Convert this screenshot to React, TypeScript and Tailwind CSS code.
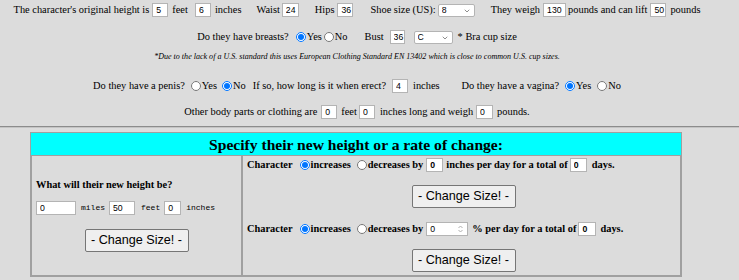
import React from "react";
import { ChevronDown } from "lucide-react";

type BoxProps = { v: string; w: string; ml?: string };

const Box = ({ v, w, ml = "" }: BoxProps) => (
  <input
    defaultValue={v}
    className={`${w} ${ml} h-[14px] shrink-0 bg-white border border-[#b4b4b4] pl-[3px] pr-0 text-[8.7px] leading-none font-['Liberation_Sans',Arial,sans-serif] text-black outline-none`}
  />
);

const Sel = ({ v, w, ml = "" }: BoxProps) => (
  <div className={`relative ${w} ${ml} h-[13px] shrink-0`}>
    <select
      defaultValue={v}
      className="appearance-none w-full h-full bg-white border border-[#b4b4b4] rounded-[2px] pl-[3px] text-[8.7px] leading-none font-['Liberation_Sans',Arial,sans-serif] text-black outline-none"
    >
      <option>{v}</option>
    </select>
    <ChevronDown className="absolute right-[4px] top-[3px] w-[8px] h-[8px] text-[#666] pointer-events-none" strokeWidth={2.2} />
  </div>
);

const Radio = ({ name, on, ml }: { name: string; on?: boolean; ml: string }) => (
  <input type="radio" name={name} defaultChecked={on} className={`${ml} mr-[1px] w-[10px] h-[10px] m-0 shrink-0`} />
);

const T = ({ children, ml = "" }: { children: React.ReactNode; ml?: string }) => (
  <span className={`${ml} whitespace-pre shrink-0`}>{children}</span>
);

const ChangeBtn = () => (
  <button className="mx-auto flex items-center justify-center w-[104px] h-[23px] bg-[#efefef] border border-[#767676] rounded-[2px] text-[12.6px] font-['Liberation_Sans',Arial,sans-serif] text-black">
    - Change Size! -
  </button>
);

const App: React.FC = () => {
  return (
    <div className="w-[739px] h-[280px] overflow-hidden bg-[#dcdcdc] text-black text-[10.4px] leading-none font-['Liberation_Serif','Times_New_Roman',serif]">
      <div className="w-[714px] pt-[2px]">
        {/* height / measurements */}
        <div className="flex items-center justify-center h-[16px]">
          <T>The character's original height is</T>
          <Box v="5" w="w-[16px]" ml="ml-[3px]" />
          <T ml="ml-[4px]">feet</T>
          <Box v="6" w="w-[16px]" ml="ml-[7px]" />
          <T ml="ml-[4px]">inches</T>
          <T ml="ml-[15px]">Waist</T>
          <Box v="24" w="w-[17px]" ml="ml-[2px]" />
          <T ml="ml-[16px]">Hips</T>
          <Box v="36" w="w-[16px]" ml="ml-[3px]" />
          <T ml="ml-[17px]">Shoe size (US):</T>
          <Sel v="8" w="w-[37px]" ml="ml-[2px]" />
          <T ml="ml-[16px]">They weigh</T>
          <Box v="130" w="w-[23px]" ml="ml-[3px]" />
          <T ml="ml-[2px]">pounds and can lift</T>
          <Box v="50" w="w-[16px]" ml="ml-[3px]" />
          <T ml="ml-[4px]">pounds</T>
        </div>

        {/* breasts */}
        <div className="flex items-center justify-center h-[16px] mt-[11px]">
          <T>Do they have breasts?</T>
          <Radio name="br" on ml="ml-[7px]" />
          <T>Yes</T>
          <Radio name="br" ml="ml-[2px]" />
          <T>No</T>
          <T ml="ml-[17px]">Bust</T>
          <Box v="36" w="w-[15px]" ml="ml-[6px]" />
          <Sel v="C" w="w-[39px]" ml="ml-[9px]" />
          <T ml="ml-[5px]">* Bra cup size</T>
        </div>
        <div className="flex items-center justify-center h-[10px] mt-[7px] italic text-[8.05px]">
          <T>*Due to the lack of a U.S. standard this uses European Clothing Standard EN 13402 which is close to common U.S. cup sizes.</T>
        </div>

        {/* penis / vagina */}
        <div className="flex items-center justify-center h-[16px] mt-[16px]">
          <T>Do they have a penis?</T>
          <Radio name="pe" ml="ml-[6px]" />
          <T>Yes</T>
          <Radio name="pe" on ml="ml-[5px]" />
          <T>No</T>
          <T ml="ml-[7px]">If so, how long is it when erect?</T>
          <Box v="4" w="w-[16px]" ml="ml-[6px]" />
          <T ml="ml-[5px]">inches</T>
          <T ml="ml-[22px]">Do they have a vagina?</T>
          <Radio name="va" on ml="ml-[6px]" />
          <T>Yes</T>
          <Radio name="va" ml="ml-[6px]" />
          <T>No</T>
        </div>

        {/* other parts */}
        <div className="flex items-center justify-center h-[16px] mt-[10px]">
          <T>Other body parts or clothing are</T>
          <Box v="0" w="w-[16px]" ml="ml-[4px]" />
          <T ml="ml-[4px]">feet</T>
          <Box v="0" w="w-[16px]" ml="ml-[2px]" />
          <T ml="ml-[5px]">inches long and weigh</T>
          <Box v="0" w="w-[17px]" ml="ml-[3px]" />
          <T ml="ml-[4px]">pounds.</T>
        </div>
      </div>

      <div className="mt-[6px] border-t border-t-[#8c8c8c] border-b border-b-[#c4c4c4]" />

      {/* new height table */}
      <div className="mt-[4px] ml-[30px] w-[652px] border border-[#a0a0a0] flex flex-col">
        <div className="h-[22px] pt-px bg-[#00ffff] flex items-center justify-center text-[15.6px] font-bold">
          Specify their new height or a rate of change:
        </div>
        <div className="flex h-[121px]">
          <div className="w-[211px] border border-[#a0a0a0] pl-[4px] flex flex-col justify-center font-bold">
            <div className="h-[12px] flex items-center">What will their new height be?</div>
            <div className="mt-[9px] flex items-center h-[14px] font-normal font-['Liberation_Mono','Courier_New',monospace] text-[8px]">
              <Box v="0" w="w-[40px]" />
              <T ml="ml-[5px]">miles</T>
              <Box v="50" w="w-[26px]" ml="ml-[4px]" />
              <T ml="ml-[6px]">feet</T>
              <Box v="0" w="w-[17px]" ml="ml-[4px]" />
              <T ml="ml-[5px]">inches</T>
            </div>
            <div className="mt-[14px] pr-[4px] font-normal">
              <ChangeBtn />
            </div>
          </div>

          <div className="flex-1 border border-[#a0a0a0] pl-[4px] pt-px font-bold">
            <div className="flex items-center h-[16px]">
              <T>Character</T>
              <Radio name="r1" on ml="ml-[7px]" />
              <T>increases</T>
              <Radio name="r1" ml="ml-[6px]" />
              <T>decreases by</T>
              <Box v="0" w="w-[17px]" ml="ml-[3px]" />
              <T ml="ml-[3px]">inches per day for a total of</T>
              <Box v="0" w="w-[17px]" ml="ml-[2px]" />
              <T ml="ml-[5px]">days.</T>
            </div>
            <div className="mt-[12px] font-normal">
              <ChangeBtn />
            </div>
            <div className="flex items-center h-[16px] mt-[13px]">
              <T>Character</T>
              <Radio name="r2" on ml="ml-[7px]" />
              <T>increases</T>
              <Radio name="r2" ml="ml-[6px]" />
              <T>decreases by</T>
              <div className="relative ml-[3px] w-[42px] h-[14px] shrink-0 bg-white border border-[#b4b4b4] flex items-center">
                <input
                  defaultValue="0"
                  className="w-[30px] h-full pl-[3px] text-[8.7px] leading-none font-normal font-['Liberation_Sans',Arial,sans-serif] outline-none bg-transparent"
                />
                <svg className="absolute right-[3px] top-[1px]" width="7" height="10" viewBox="0 0 7 10" fill="none" stroke="#b0b0b0" strokeWidth="1">
                  <path d="M1.5 4 L3.5 2 L5.5 4" />
                  <path d="M1.5 6 L3.5 8 L5.5 6" />
                </svg>
              </div>
              <T ml="ml-[4px]">% per day for a total of</T>
              <Box v="0" w="w-[18px]" ml="ml-[2px]" />
              <T ml="ml-[4px]">days.</T>
            </div>
            <div className="mt-[12px] font-normal">
              <ChangeBtn />
            </div>
          </div>
        </div>
      </div>
    </div>
  );
};

export default App;
